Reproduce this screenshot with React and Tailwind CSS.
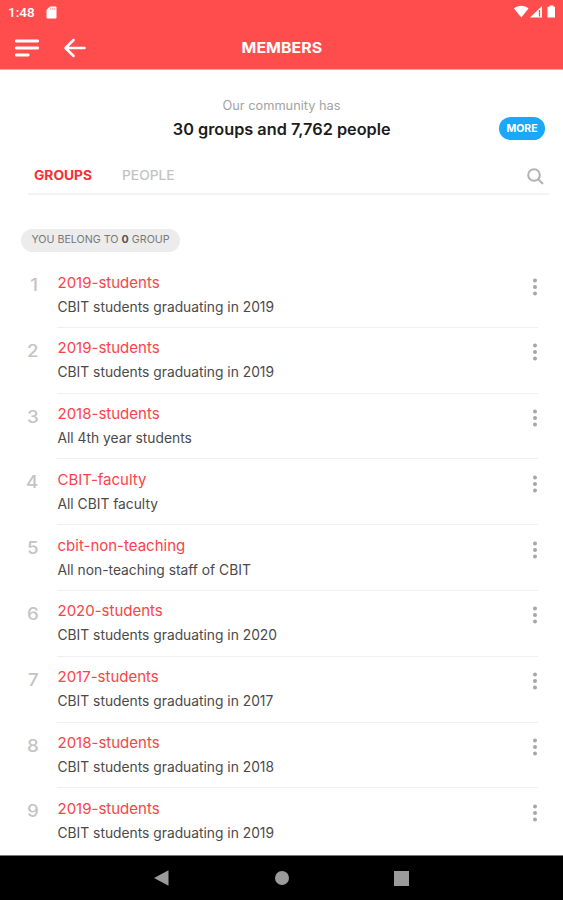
import React from 'react';

const groups = [
  { name: '2019-students', description: 'CBIT students graduating in 2019' },
  { name: '2019-students', description: 'CBIT students graduating in 2019' },
  { name: '2018-students', description: 'All 4th year students' },
  { name: 'CBIT-faculty', description: 'All CBIT faculty' },
  { name: 'cbit-non-teaching', description: 'All non-teaching staff of CBIT' },
  { name: '2020-students', description: 'CBIT students graduating in 2020' },
  { name: '2017-students', description: 'CBIT students graduating in 2017' },
  { name: '2018-students', description: 'CBIT students graduating in 2018' },
  { name: '2019-students', description: 'CBIT students graduating in 2019' },
];

const StatusBar = () => (
  <div className="flex h-6 items-center justify-between pl-2 pr-[7px] text-white">
    <div className="flex items-center">
      <span className="w-[38px] font-['Roboto',sans-serif] text-[13.5px] font-medium leading-6">1:48</span>
      <svg width="11" height="13" viewBox="0 0 11 13" fill="none">
        <path d="M4 .5h5.5a1 1 0 0 1 1 1v10a1 1 0 0 1-1 1h-8a1 1 0 0 1-1-1V4z" fill="#fff" />
        <path d="M4.5 2v2M6.5 2v2M8.5 2v2" stroke="#ff9a9a" strokeWidth=".8" />
      </svg>
    </div>
    <svg width="42" height="14" viewBox="0 0 42 14" fill="#fff">
      <path d="M0 3.5C4-.3 10.5-.3 14.5 3.5L7.3 12.5z" />
      <path d="M28 1v11.500H16z" />
      <path d="M25.500 5v6.500" stroke="#ff4d4d" strokeWidth="1.300" />
      <path d="M35.500.5h4v1.300h1.500v10.700h-7.500V1.800h2z" />
    </svg>
  </div>
);

const Header = () => (
  <header className="h-[70px] shrink-0 border-b border-[#ffa3a3] bg-[#ff4d4e]">
    <StatusBar />
    <div className="grid h-[46px] grid-cols-3 items-center">
      <div className="flex items-center gap-[25px] pl-[15px] pt-px">
        <svg width="24" height="18" viewBox="0 0 24 18" fill="none" stroke="#fff" strokeWidth="2.800" strokeLinecap="round">
          <path d="M1.300 2h21.400M1.300 9h21.400M1.300 16h11.900" />
        </svg>
        <svg width="22" height="20" viewBox="0 0 22 20" fill="none" stroke="#fff" strokeWidth="2.500" strokeLinecap="round" strokeLinejoin="round">
          <path d="M9.500 2L1.500 10l8 8M2 10h18.500" />
        </svg>
      </div>
      <h1 className="scale-x-110 pt-px text-center text-[14.5px] font-bold text-white">MEMBERS</h1>
    </div>
  </header>
);

const Summary = () => (
  <section className="grid grid-cols-[1fr_auto_1fr] items-end pt-[26px]">
    <div className="col-start-2 text-center">
      <p className="text-[12.8px] leading-5 text-[#a3a3a3]">Our community has</p>
      <p className="mt-[2px] scale-x-105 text-[15.5px] font-semibold leading-6 text-[#1c1c1c]">30 groups and 7,762 people</p>
    </div>
    <button className="mb-[2px] mr-[18px] h-[23px] w-[46px] justify-self-end rounded-full bg-[#1ba8fb] text-[10.5px] font-bold text-white">
      MORE
    </button>
  </section>
);

const Tabs = () => (
  <nav className="ml-7 mr-[14px] mt-[18px] flex h-[35px] items-start border-b-2 border-[#f3f3f3]">
    <span className="w-[88px] pl-[6px] text-[13px] leading-[30px] font-bold text-[#f72f32]">
      <span className="inline-block origin-left scale-x-[1.06]">GROUPS</span>
    </span>
    <span className="pl-[6px] text-[13px] font-medium leading-[30px] text-[#c3c3c3]">
      <span className="inline-block origin-left scale-x-[1.06]">PEOPLE</span>
    </span>
    <svg className="ml-auto mr-[5px] mt-2" width="17" height="17" viewBox="0 0 17 17" fill="none" stroke="#b2b2b2" strokeWidth="2">
      <circle cx="7" cy="7" r="5.800" />
      <path d="M11.200 11.200L16 16" />
    </svg>
  </nav>
);

const GroupRow = ({ group, position, isLast }) => (
  <li className="flex h-[65.8px]">
    <span className="w-[57px] shrink-0 pr-[18.500px] pt-[11px] text-right text-[17px] font-medium leading-6 text-[#c4c4c4]">
      <span className="inline-block origin-right scale-x-110">{position}</span>
    </span>
    <div className={`mr-[25px] flex min-w-0 flex-1 justify-between border-b ${isLast ? 'border-transparent' : 'border-[#efefef]'}`}>
      <div className="pl-[0.500px]">
        <p className="pt-[9.500px] text-[15px] leading-[22px] text-[#f94448]">{group.name}</p>
        <p className="pt-[3px] text-[13.8px] leading-5 text-[#4a4a4a]">{group.description}</p>
      </div>
      <svg className="mt-[15.500px]" width="6" height="18" viewBox="0 0 6 18" fill="#a6a6a6">
        <circle cx="3" cy="2.500" r="2" />
        <circle cx="3" cy="9" r="2" />
        <circle cx="3" cy="15.500" r="2" />
      </svg>
    </div>
  </li>
);

const NavigationBar = () => (
  <footer className="flex h-[45px] shrink-0 items-center justify-between border-t border-[#777] bg-black px-[154px]">
    <svg width="15" height="16" viewBox="0 0 15 16" fill="#9b9b9b"><path d="M0 8L14.500.3v15.400z" /></svg>
    <span className="h-[14px] w-[14px] rounded-full bg-[#9b9b9b]" />
    <span className="h-[15px] w-[15px] bg-[#9b9b9b]" />
  </footer>
);

export default function App() {
  return (
    <div className="flex h-[900px] w-[563px] flex-col overflow-hidden bg-white font-['Inter',sans-serif]">
      <Header />
      <main className="min-h-0 flex-1 overflow-hidden">
        <Summary />
        <Tabs />
        <div className="ml-[21px] mt-[34px] flex h-[23px] w-[159px] items-center justify-center rounded-full bg-[#ececec] text-[10.7px] text-[#777]">
          <span>YOU BELONG TO <b className="text-[#555]">0</b> GROUP</span>
        </div>
        <ul className="mt-[10px]">
          {groups.map((group, index) => (
            <GroupRow key={index} group={group} position={index + 1} isLast={index === groups.length - 1} />
          ))}
        </ul>
      </main>
      <NavigationBar />
    </div>
  );
}
